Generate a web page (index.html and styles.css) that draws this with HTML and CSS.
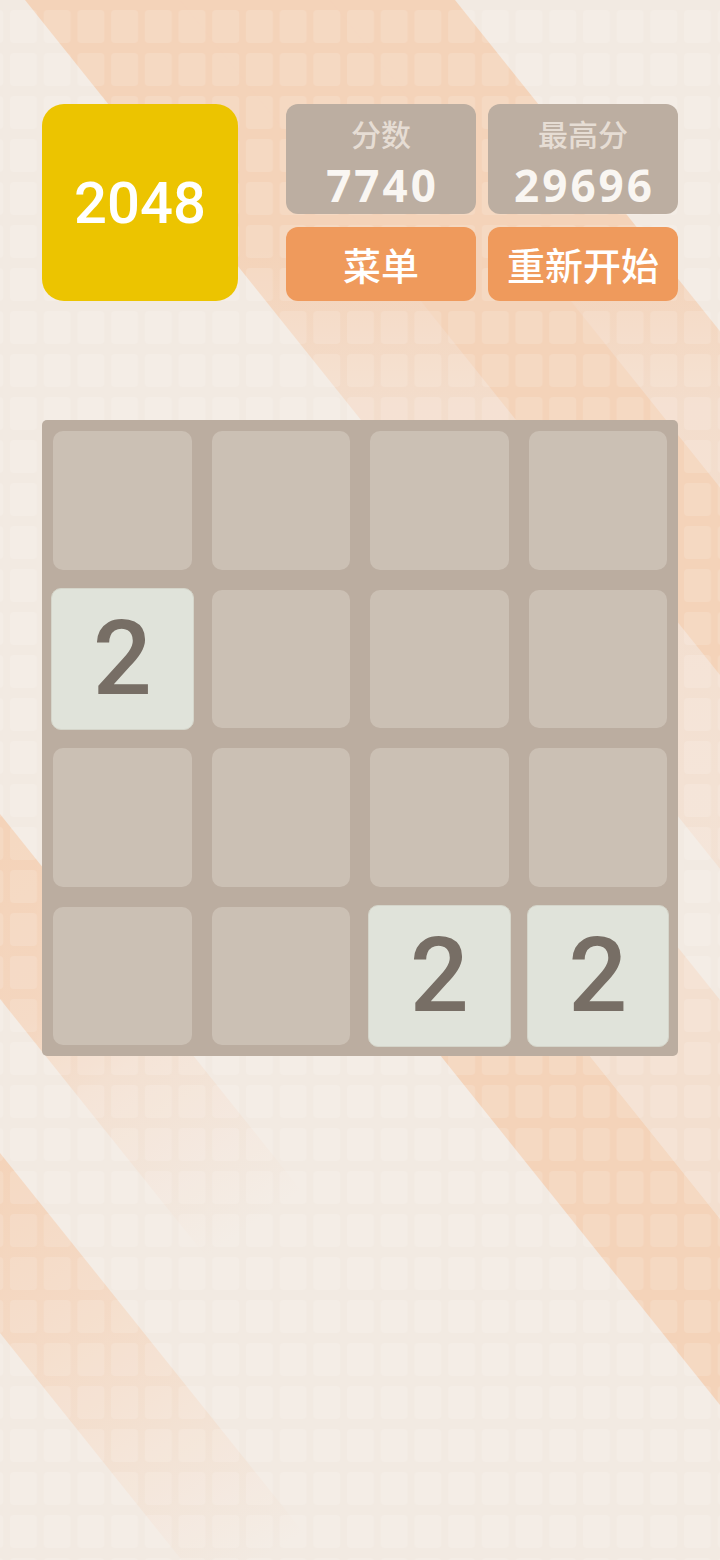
FILE: index.html
```html
<!DOCTYPE html>
<html lang="zh">
<head>
<meta charset="utf-8">
<title>2048</title>
<link rel="stylesheet" href="styles.css">
</head>
<body>
<div class="page">
  <svg class="bg" width="720" height="1560" viewBox="0 0 720 1560" aria-hidden="true">
    <defs>
      <pattern id="grid" x="10" y="10" width="33.7" height="43" patternUnits="userSpaceOnUse">
        <rect x="0" y="0" width="27" height="33" rx="4" fill="#ffffff" fill-opacity="0.13"/>
      </pattern>
      <linearGradient id="gP" x1="0" y1="0" x2="0" y2="1560" gradientUnits="userSpaceOnUse">
        <stop offset="0" stop-color="#f4d3b9"/>
        <stop offset="0.16" stop-color="#f4d3b9"/>
        <stop offset="0.26" stop-color="#f3ddcc"/>
        <stop offset="0.5" stop-color="#f3e1d3"/>
        <stop offset="1" stop-color="#f2e5da"/>
      </linearGradient>
      <linearGradient id="gL" x1="0" y1="850" x2="260" y2="1220" gradientUnits="userSpaceOnUse">
        <stop offset="0" stop-color="#f4d3b9"/>
        <stop offset="0.35" stop-color="#f4d6bf"/>
        <stop offset="0.55" stop-color="#f3e0d1"/>
        <stop offset="1" stop-color="#f2eae2"/>
      </linearGradient>
      <linearGradient id="gS" x1="0" y1="1150" x2="260" y2="1560" gradientUnits="userSpaceOnUse">
        <stop offset="0" stop-color="#f4d3b9"/>
        <stop offset="0.35" stop-color="#f4d9c4"/>
        <stop offset="1" stop-color="#f2eae2"/>
      </linearGradient>
    </defs>
    <rect width="720" height="1560" fill="#f2eae2"/>
    <polygon points="25,0 455,0 1455,1250 1025,1250" fill="url(#gP)"/>
    <polygon points="180,0 330,0 1130,1000 980,1000" fill="#f4d3b9"/>
    <polygon points="-200,564 -200,749 600,1749 600,1564" fill="url(#gL)"/>
    <polygon points="-200,903 -200,1083 500,1958 500,1778" fill="url(#gS)"/>
    <polygon points="465,900 640,900 1168,1560 993,1560" fill="#f3dfcf"/>
    <polygon points="316,900 465,900 993,1560 844,1560" fill="#f4d3b9"/>
    <rect width="720" height="1560" fill="url(#grid)"/>
  </svg>

  <header class="top">
    <div class="logo">2048</div>
    <div class="panel">
      <div class="score">
        <span class="label">分数</span>
        <span class="value">7740</span>
      </div>
      <div class="score">
        <span class="label">最高分</span>
        <span class="value">29696</span>
      </div>
      <button class="btn">菜单</button>
      <button class="btn">重新开始</button>
    </div>
  </header>

  <main class="board">
    <div class="cell"></div>
    <div class="cell"></div>
    <div class="cell"></div>
    <div class="cell"></div>
    <div class="cell tile">2</div>
    <div class="cell"></div>
    <div class="cell"></div>
    <div class="cell"></div>
    <div class="cell"></div>
    <div class="cell"></div>
    <div class="cell"></div>
    <div class="cell"></div>
    <div class="cell"></div>
    <div class="cell"></div>
    <div class="cell tile">2</div>
    <div class="cell tile">2</div>
  </main>
</div>
</body>
</html>
```

FILE: styles.css
```css
* {
  box-sizing: border-box;
}

html,
body {
  margin: 0;
  padding: 0;
}

body {
  width: 720px;
  height: 1560px;
  overflow: hidden;
  background: #f3ebe4;
  font-family: Roboto, "Noto Sans CJK SC", sans-serif;
}

.page {
  position: relative;
  width: 720px;
  height: 1560px;
}

.bg {
  position: absolute;
  left: 0;
  top: 0;
  z-index: 0;
  display: block;
}

.top {
  position: relative;
  z-index: 1;
  display: flex;
  gap: 48px;
  padding: 104px 42px 0;
}

.logo {
  width: 196px;
  height: 197px;
  border-radius: 22px;
  background: #ecc400;
  color: #ffffff;
  font: 500 58px/1 Roboto, sans-serif;
  display: flex;
  align-items: center;
  justify-content: center;
}

.panel {
  display: grid;
  grid-template-columns: 190px 190px;
  grid-template-rows: 110px 74px;
  column-gap: 12px;
  row-gap: 13px;
}

.score {
  background: #bcaea1;
  border-radius: 12px;
  display: flex;
  flex-direction: column;
  align-items: center;
  padding-top: 14px;
}

.label {
  font: 500 30px/1 "Noto Sans CJK SC", sans-serif;
  color: #e6ddd4;
}

.value {
  font: 700 44px/1 "Open Sans", sans-serif;
  color: #f9f6f2;
  margin-top: 15px;
  letter-spacing: 3px;
  padding-left: 3px;
}

.btn {
  border: 0;
  padding: 0;
  margin: 0;
  background: #ef9a5c;
  border-radius: 12px;
  color: #ffffff;
  font: 500 38px/1 "Noto Sans CJK SC", sans-serif;
  display: flex;
  align-items: center;
  justify-content: center;
}

.board {
  position: relative;
  z-index: 1;
  margin: 119px 42px 0;
  width: 636px;
  height: 636px;
  background: #bbada0;
  border-radius: 5px;
  padding: 11px;
  display: grid;
  grid-template-columns: repeat(4, 1fr);
  grid-template-rows: repeat(4, 1fr);
  gap: 20px;
}

.cell {
  background: #cbc0b4;
  border-radius: 10px;
}

.tile {
  background: #e0e3da;
  margin: -2px;
  border: 1.5px solid #d5d5ca;
  display: flex;
  align-items: center;
  justify-content: center;
  color: #776e65;
  font: 500 104px/1 Roboto, sans-serif;
}
```
